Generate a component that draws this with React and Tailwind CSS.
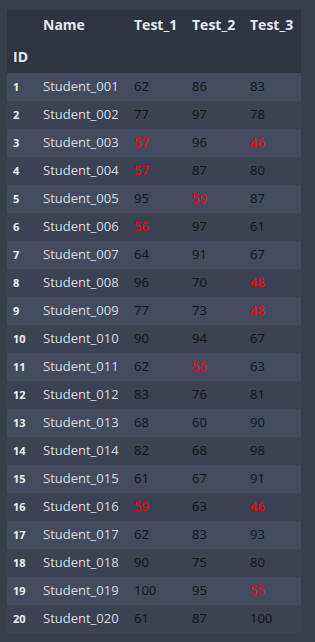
import React from 'react';

const rows = [
  [1, 62, 86, 83], [2, 77, 97, 78], [3, 57, 96, 46], [4, 57, 87, 80], [5, 95, 59, 87],
  [6, 56, 97, 61], [7, 64, 91, 67], [8, 96, 70, 48], [9, 77, 73, 48], [10, 90, 94, 67],
  [11, 62, 55, 63], [12, 83, 76, 81], [13, 68, 60, 90], [14, 82, 68, 98], [15, 61, 67, 91],
  [16, 59, 63, 46], [17, 62, 83, 93], [18, 90, 75, 80], [19, 100, 95, 55], [20, 61, 87, 100],
];

const Score = ({ v }) => (
  <td className={`px-1.5 ${v < 60 ? 'text-[#ff0000]' : 'text-[#111418]'}`}>{v}</td>
);

export default function App() {
  return (
    <div className="w-[315px] h-[642px] bg-[#373e4c] pl-[7px] pt-[10px]" style={{ fontFamily: '"Open Sans", "Noto Sans", sans-serif' }}>
      <table className="w-[294px] border-collapse text-[13px] table-fixed">
        <colgroup>
          <col className="w-[30px]" />
          <col className="w-[91px]" />
          <col className="w-[58px]" />
          <col className="w-[58px]" />
          <col className="w-[57px]" />
        </colgroup>
        <thead className="bg-[#2e3440] text-[#e5e9f0] font-bold text-left">
          <tr className="h-[32px]">
            <th></th>
            <th className="px-1.5 pb-[4px] text-[14px]">Name</th>
            <th className="px-1.5 pb-[4px] text-[14px]">Test_1</th>
            <th className="px-1.5 pb-[4px] text-[14px]">Test_2</th>
            <th className="px-1.5 pb-[4px] text-[14px]">Test_3</th>
          </tr>
          <tr className="h-[31px]">
            <th className="px-1.5 pb-[3px] text-[14px]">ID</th>
            <th></th><th></th><th></th><th></th>
          </tr>
        </thead>
        <tbody>
          {rows.map(([id, a, b, c]) => (
            <tr key={id} className={`h-[28px] ${id % 2 ? 'bg-[#434c5e]' : 'bg-[#3b4252]'}`}>
              <td className="px-1.5 text-[11px] font-bold text-[#eceff4]">{id}</td>
              <td className="px-1.5 text-[#d8dee9]">Student_{String(id).padStart(3, '0')}</td>
              <Score v={a} />
              <Score v={b} />
              <Score v={c} />
            </tr>
          ))}
        </tbody>
      </table>
    </div>
  );
}
